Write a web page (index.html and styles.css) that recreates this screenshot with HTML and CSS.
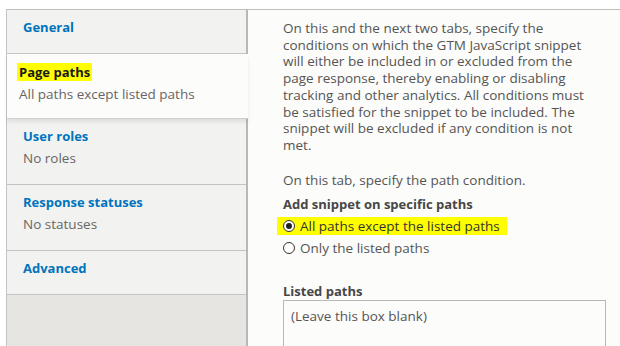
FILE: index.html
```html
<!DOCTYPE html>
<html>
<head>
<meta charset="utf-8">
<link rel="stylesheet" href="styles.css">
</head>
<body>
<div class="vtabs">
  <ul class="menu">
    <li class="tab">
      <a class="tab-title" href="#">General</a>
    </li>
    <li class="tab active">
      <a class="tab-title" href="#"><span class="hl">Page paths</span></a>
      <span class="tab-summary">All paths except listed paths</span>
    </li>
    <li class="tab">
      <a class="tab-title" href="#">User roles</a>
      <span class="tab-summary">No roles</span>
    </li>
    <li class="tab">
      <a class="tab-title" href="#">Response statuses</a>
      <span class="tab-summary">No statuses</span>
    </li>
    <li class="tab">
      <a class="tab-title" href="#">Advanced</a>
    </li>
  </ul>
  <div class="pane">
    <p class="desc">On this and the next two tabs, specify the conditions on which the GTM JavaScript snippet will either be included in or excluded from the page response, thereby enabling or disabling tracking and other analytics. All conditions must be satisfied for the snippet to be included. The snippet will be excluded if any condition is not met.</p>
    <p class="desc second">On this tab, specify the path condition.</p>
    <div class="field">
      <div class="label">Add snippet on specific paths</div>
      <label class="radio-row hl-row"><span class="radio checked"></span>All paths except the listed paths</label>
      <label class="radio-row"><span class="radio"></span>Only the listed paths</label>
    </div>
    <div class="field listed">
      <div class="label">Listed paths</div>
      <div class="textarea">(Leave this box blank)</div>
    </div>
  </div>
</div>
</body>
</html>
```

FILE: styles.css
```css
html, body {
  margin: 0;
  padding: 0;
  background: #ffffff;
  height: 346px;
  overflow: hidden;
}
body {
  font-family: "Open Sans", "Noto Sans", "DejaVu Sans", sans-serif;
  font-size: 13.5px;
  color: #555;
}
.vtabs {
  display: flex;
  margin: 9px 0 0 6px;
  border-top: 1px solid #bdbdbd;
  border-left: 1px solid #c4c4c4;
  height: 400px;
}
.menu {
  list-style: none;
  margin: 0;
  padding: 0;
  width: 239px;
  flex: none;
  background: #e6e5e1;
  border-right: 2px solid #b8b8b8;
}
.tab {
  display: flex;
  flex-direction: column;
  align-items: flex-start;
  background: #f2f2f0;
  border-bottom: 1px solid #c4c4c4;
  padding: 8px 16px 17px 16px;
}
.tab-title {
  font-weight: bold;
  font-size: 13px;
  color: #0074bd;
  text-decoration: none;
  line-height: 18px;
}
.tab-summary {
  margin-top: 4px;
  line-height: 18px;
  color: #666;
}
.tab.active {
  background: #fcfcfa;
  margin-right: -2px;
  padding: 9px 18px 15px 10px;
  border-bottom: 1px solid #cfcfcf;
  box-shadow: 0 3px 4px rgba(0,0,0,0.08);
  position: relative;
  z-index: 1;
}
.tab.active .tab-title {
  color: #1a1a1a;
}
.tab.active .tab-summary {
  margin-left: 2px;
}
.hl {
  background: #ffff00;
  padding: 0 2px;
}
.pane {
  flex: 1;
  background: #fcfcfa;
  padding: 10px 12px 0 35px;
}
.desc {
  margin: 0;
  line-height: 16.7px;
  width: 312px;
  color: #555;
}
.desc.second {
  margin-top: 18px;
}
.field {
  margin-top: 7px;
}
.label {
  font-weight: bold;
  font-size: 13px;
  color: #474747;
  line-height: 18px;
}
.radio-row {
  display: flex;
  align-items: center;
  gap: 5px;
  line-height: 18px;
  height: 18px;
  margin-top: 4px;
  color: #555;
}
.hl-row {
  background: #ffff00;
  width: fit-content;
  margin-left: -6px;
  padding: 0 7px 0 6px;
  color: #333;
}
.radio {
  box-sizing: border-box;
  width: 12px;
  height: 12px;
  border: 1px solid #333;
  border-radius: 50%;
  background: #fff;
  flex: none;
  display: flex;
  align-items: center;
  justify-content: center;
}
.radio.checked::after {
  content: "";
  width: 6px;
  height: 6px;
  border-radius: 50%;
  background: #222;
}
.listed {
  margin-top: 25px;
}
.textarea {
  margin-top: 0;
  width: 323px;
  height: 80px;
  box-sizing: border-box;
  border: 1px solid #b8b8b8;
  background: #fcfcfa;
  padding: 6px 7px;
  line-height: 18px;
  color: #555;
}
```
